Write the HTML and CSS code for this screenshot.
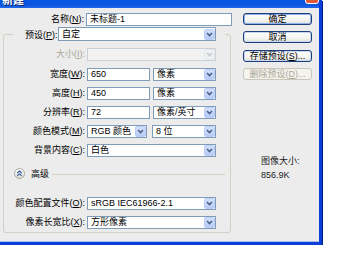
FILE: index.html
```html
<!DOCTYPE html>
<html lang="zh-CN">
<head>
<meta charset="utf-8">
<title>新建</title>
<link rel="stylesheet" href="styles.css">
</head>
<body>
<div class="window">
  <div class="titlebar"><span class="title">新建</span><span class="close"></span></div>
  <div class="client">
    <div class="main">
      <div class="row name-row"><span class="lbl">名称(<u>N</u>):</span><div class="field w-name">未标题-1</div></div>
      <fieldset class="group">
        <legend class="preset"><div class="preset-in"><span class="plbl">预设(<u>P</u>):</span><div class="select w-preset"><span>自定</span><span class="arr"><svg width="7" height="5" viewBox="0 0 7 5"><path d="M1 1 L3.5 3.5 L6 1" /></svg></span></div></div></legend>
        <div class="row r-size"><span class="lbl dis">大小(<u>I</u>):</span><div class="select disabled w-full"><span></span><span class="arr"><svg width="7" height="5" viewBox="0 0 7 5"><path d="M1 1 L3.5 3.5 L6 1" /></svg></span></div></div>
        <div class="row r-width"><span class="lbl">宽度(<u>W</u>):</span><div class="field w-num">650</div><div class="select w-unit gap3"><span>像素</span><span class="arr"><svg width="7" height="5" viewBox="0 0 7 5"><path d="M1 1 L3.5 3.5 L6 1" /></svg></span></div></div>
        <div class="row r-next"><span class="lbl">高度(<u>H</u>):</span><div class="field w-num">450</div><div class="select w-unit gap3"><span>像素</span><span class="arr"><svg width="7" height="5" viewBox="0 0 7 5"><path d="M1 1 L3.5 3.5 L6 1" /></svg></span></div></div>
        <div class="row r-next"><span class="lbl">分辨率(<u>R</u>):</span><div class="field w-num">72</div><div class="select w-unit gap3"><span>像素/英寸</span><span class="arr"><svg width="7" height="5" viewBox="0 0 7 5"><path d="M1 1 L3.5 3.5 L6 1" /></svg></span></div></div>
        <div class="row r-next"><span class="lbl">颜色模式(<u>M</u>):</span><div class="select w-mode"><span>RGB 颜色</span><span class="arr"><svg width="7" height="5" viewBox="0 0 7 5"><path d="M1 1 L3.5 3.5 L6 1" /></svg></span></div><div class="select w-bits gap5"><span>8 位</span><span class="arr"><svg width="7" height="5" viewBox="0 0 7 5"><path d="M1 1 L3.5 3.5 L6 1" /></svg></span></div></div>
        <div class="row r-next"><span class="lbl">背景内容(<u>C</u>):</span><div class="select w-full"><span>白色</span><span class="arr"><svg width="7" height="5" viewBox="0 0 7 5"><path d="M1 1 L3.5 3.5 L6 1" /></svg></span></div></div>
        <div class="adv">
          <span class="adv-btn"><svg width="11" height="11" viewBox="0 0 11 11"><defs><linearGradient id="g" x1="0" y1="0" x2="0" y2="1"><stop offset="0" stop-color="#ffffff"/><stop offset="1" stop-color="#dcdcd6"/></linearGradient></defs><circle cx="5.5" cy="5.5" r="5" fill="url(#g)" stroke="#a8a8a0"/><path d="M3.3 5 L5.5 2.9 L7.7 5 M3.3 7.8 L5.5 5.7 L7.7 7.8" fill="none" stroke="#2f4f8f" stroke-width="1.1"/></svg></span>
          <span class="adv-text">高级</span>
          <span class="adv-line"></span>
        </div>
        <div class="row r-profile"><span class="lbl">颜色配置文件(<u>O</u>):</span><div class="select w-full"><span>sRGB IEC61966-2.1</span><span class="arr"><svg width="7" height="5" viewBox="0 0 7 5"><path d="M1 1 L3.5 3.5 L6 1" /></svg></span></div></div>
        <div class="row r-next"><span class="lbl">像素长宽比(<u>X</u>):</span><div class="select w-full"><span>方形像素</span><span class="arr"><svg width="7" height="5" viewBox="0 0 7 5"><path d="M1 1 L3.5 3.5 L6 1" /></svg></span></div></div>
      </fieldset>
    </div>
    <div class="side">
      <div class="btn default">确定</div>
      <div class="btn b2">取消</div>
      <div class="btn b3">存储预设(<u>S</u>)...</div>
      <div class="btn b4 off">删除预设(<u>D</u>)...</div>
      <div class="info"><div>图像大小:</div><div>856.9K</div></div>
    </div>
  </div>
</div>
</body>
</html>
```
FILE: styles.css
```css
body {
  margin: 0;
  background: #ffffff;
  font-family: "Liberation Sans", "Noto Sans CJK SC", sans-serif;
  font-size: 9px;
  color: #000;
}
.window {
  width: 319px;
  border-right: 3px solid #0b3fd8;
  border-bottom: 3px solid #0b3fd8;
  box-shadow: 1px 1px 0 #001a86;
}
.titlebar {
  height: 8px;
  background: linear-gradient(#0b55df, #0a56e2 60%, #2367e9);
  display: flex;
  align-items: flex-end;
  justify-content: space-between;
  overflow: hidden;
}
.title {
  color: #fff;
  font-weight: bold;
  font-size: 11px;
  line-height: 11px;
  margin: 0 0 2px 2px;
  text-shadow: 1px 1px 0 #0a246a;
}
.close {
  flex: none;
  width: 14px;
  height: 18px;
  box-sizing: border-box;
  border: 1px solid #fff;
  border-radius: 3px;
  background: #e0573a;
  margin-bottom: 4px;
}
.client {
  height: 234px;
  background: #ececec;
  display: flex;
  box-shadow: inset 0 -1px 0 #a9bdf0;
}
.main {
  width: 233px;
  padding-top: 5px;
}
.row {
  display: flex;
  align-items: center;
  height: 13px;
}
.lbl {
  flex: none;
  width: 83px;
  box-sizing: border-box;
  padding-right: 2px;
  text-align: right;
  white-space: nowrap;
  line-height: 13px;
}
.name-row .lbl { width: 86px; }
.lbl.dis { color: #aca899; }
.field, .select {
  flex: none;
  height: 13px;
  box-sizing: border-box;
  border: 1px solid #7f9db9;
  background: #fff;
  padding-left: 3px;
  line-height: 11px;
  white-space: nowrap;
  overflow: hidden;
}
.select {
  display: flex;
  align-items: center;
  justify-content: space-between;
}
.arr {
  flex: none;
  width: 11px;
  height: 11px;
  box-sizing: border-box;
  border: 1px solid #b9cdf6;
  border-radius: 2px;
  background: linear-gradient(#d3e0fc, #b6cbf7);
  display: flex;
  align-items: center;
  justify-content: center;
}
.arr path {
  fill: none;
  stroke: #4d6185;
  stroke-width: 1.6;
}
.select.disabled {
  border-color: #c8d0da;
  background: #f2f2f2;
}
.select.disabled .arr {
  border-color: #e4e6ea;
  background: #eff0f2;
}
.select.disabled .arr path { stroke: #c4c8cf; }
.w-name { width: 146px; }
.w-preset { width: 158px; height: 14px; }
.w-full { width: 129px; }
.w-num { width: 63px; }
.w-unit { width: 63px; }
.w-mode { width: 60px; }
.w-bits { width: 64px; }
.gap3 { margin-left: 3px; }
.gap5 { margin-left: 5px; }

.group {
  margin: 1px 0 0 3px;
  width: 228px;
  min-width: 0;
  box-sizing: border-box;
  padding: 0 0 3px 0;
  border: 1px solid #d0d0c4;
  border-radius: 3px;
}
.preset {
  margin-left: 9px;
  padding: 0 9px 0 12px;
}
.preset-in {
  display: flex;
  align-items: center;
  height: 14px;
}
.plbl {
  width: 33px;
  box-sizing: border-box;
  padding-right: 2px;
  text-align: right;
  white-space: nowrap;
}
.r-size { margin-top: 7px; }
.r-width { margin-top: 7px; }
.r-next { margin-top: 6px; }
.r-profile { margin-top: 17px; }
.adv {
  margin-top: 9px;
  height: 14px;
  display: flex;
  align-items: center;
}
.adv-btn {
  display: flex;
  margin-left: 10px;
}
.adv-text {
  margin-left: 6px;
  white-space: nowrap;
}
.adv-line {
  flex: 1;
  height: 1px;
  background: #d0d0c4;
  margin: 2px 5px 0 3px;
}

.side {
  margin-left: 10px;
  width: 69px;
  padding-top: 5px;
}
.btn {
  height: 12px;
  box-sizing: border-box;
  border: 1px solid #1d3f7a;
  border-radius: 3px;
  background: linear-gradient(#ffffff, #f4f4f0 60%, #e2e1da);
  text-align: center;
  line-height: 10px;
  white-space: nowrap;
  box-shadow: inset 0 0 0 1px #c9d6f2;
}
.btn.default { box-shadow: inset 0 0 0 1px #8fb0ec; }
.b2 { margin-top: 6px; }
.b3 { margin-top: 7px; }
.b4 { margin-top: 6px; }
.btn.off {
  border-color: #c9c7ba;
  color: #aca899;
  background: #f4f3ee;
  box-shadow: none;
}
.info {
  margin-top: 74px;
  padding-left: 18px;
  line-height: 14px;
  color: #222;
}
```
